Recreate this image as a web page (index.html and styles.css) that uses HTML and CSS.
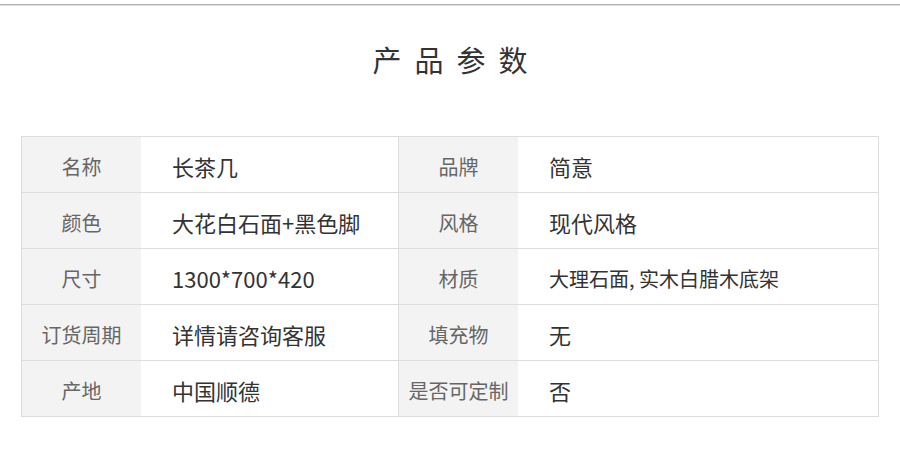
FILE: index.html
```html
<!DOCTYPE html>
<html lang="zh-CN">
<head>
<meta charset="utf-8">
<title>产品参数</title>
<link rel="stylesheet" href="styles.css">
</head>
<body>
<div class="topline"></div>
<h1 class="title">产品参数</h1>
<div class="spec">
  <div class="label">名称</div><div class="value mid">长茶几</div>
  <div class="label">品牌</div><div class="value">简意</div>

  <div class="label">颜色</div><div class="value mid">大花白石面+黑色脚</div>
  <div class="label">风格</div><div class="value">现代风格</div>

  <div class="label">尺寸</div><div class="value mid">1300*700*420</div>
  <div class="label">材质</div><div class="value small">大理石面, 实木白腊木底架</div>

  <div class="label">订货周期</div><div class="value mid">详情请咨询客服</div>
  <div class="label">填充物</div><div class="value">无</div>

  <div class="label last">产地</div><div class="value mid last">中国顺德</div>
  <div class="label last">是否可定制</div><div class="value last">否</div>
</div>
</body>
</html>
```
FILE: styles.css
```css
html, body {
  margin: 0;
  padding: 0;
  background: #fff;
}
body {
  width: 900px;
  font-family: "Noto Sans CJK SC", "Noto Sans", sans-serif;
  color: #333;
}
.topline {
  margin-top: 4px;
  height: 1px;
  background: #b0b0b0;
  border-bottom: 1px solid #dcdcdc;
}
.title {
  margin: 35px 0 0;
  height: 36px;
  line-height: 36px;
  font-size: 29px;
  font-weight: 400;
  text-align: center;
  letter-spacing: 13px;
  padding-left: 13px;
  color: #333;
}
.spec {
  margin: 59px 21px 0;
  border: 1px solid #dddddd;
  display: grid;
  grid-template-columns: 119px 258px 119px 1fr;
}
.label, .value {
  box-sizing: border-box;
  height: 56px;
  padding-top: 3px;
  border-bottom: 1px solid #dddddd;
  display: flex;
  align-items: center;
}
.label {
  background: #f3f3f3;
  color: #666;
  font-size: 20px;
  justify-content: center;
}
.value {
  padding-left: 31px;
  font-size: 22px;
  color: #333;
}
.value.small {
  font-size: 20px;
}
.mid {
  border-right: 1px solid #dddddd;
}
.last {
  border-bottom: none;
  height: 55px;
}
```
